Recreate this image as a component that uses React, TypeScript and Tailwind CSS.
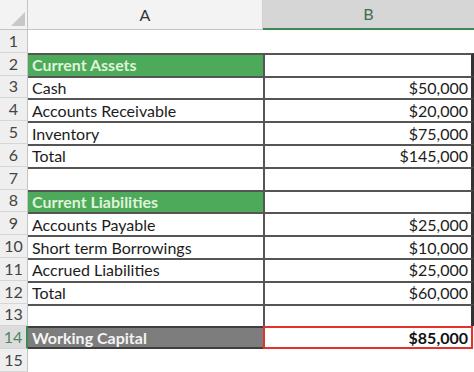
import React from "react"

type Row = {
  n: number
  a?: string
  b?: string
  kind?: "blank" | "head" | "item" | "result"
}

const rows: Row[] = [
  { n: 1, kind: "blank" },
  { n: 2, a: "Current Assets", kind: "head" },
  { n: 3, a: "Cash", b: "$50,000" },
  { n: 4, a: "Accounts Receivable", b: "$20,000" },
  { n: 5, a: "Inventory", b: "$75,000" },
  { n: 6, a: "Total", b: "$145,000" },
  { n: 7 },
  { n: 8, a: "Current Liabilities", kind: "head" },
  { n: 9, a: "Accounts Payable", b: "$25,000" },
  { n: 10, a: "Short term Borrowings", b: "$10,000" },
  { n: 11, a: "Accrued Liabilities", b: "$25,000" },
  { n: 12, a: "Total", b: "$60,000" },
  { n: 13 },
  { n: 14, a: "Working Capital", b: "$85,000", kind: "result" },
  { n: 15, kind: "blank" },
]

function RowNumber({ n, active }: { n: number; active?: boolean }) {
  return (
    <div
      className={
        "w-[28px] shrink-0 flex items-center justify-center border-b border-[#d6d6d6] text-[16px] " +
        (active
          ? "bg-[#dcdcdc] text-[#4d8560] border-r-2 border-r-[#3c8a52]"
          : "bg-[#efefef] text-[#444] border-r border-r-[#c4c4c4]")
      }
    >
      {n}
    </div>
  )
}

function SheetRow({ row }: { row: Row }) {
  const kind = row.kind ?? "item"

  if (kind === "blank") {
    return (
      <div className="flex h-[22.8px]">
        <RowNumber n={row.n} />
        <div className="flex-1 bg-white" />
      </div>
    )
  }

  if (kind === "result") {
    return (
      <div className="flex h-[22.8px]">
        <RowNumber n={row.n} active />
        <div className="w-[235px] shrink-0 flex items-center pl-1 bg-[#7d7d7d] border-y-2 border-[#3e3e3e] font-bold text-[#f4f4f4]">
          {row.a}
        </div>
        <div className="flex-1 flex items-center justify-end pr-[3px] bg-white border-2 border-[#e3312b] font-bold text-[#111] mr-[1px]">
          {row.b}
        </div>
      </div>
    )
  }

  return (
    <div className="flex h-[22.8px]">
      <RowNumber n={row.n} />
      <div
        className={
          "w-[235px] shrink-0 flex items-center pl-1 border-t-2 border-[#555] " +
          (kind === "head" ? "bg-[#4caa5a] font-bold text-[#dff3d8]" : "bg-white text-[#1c1c1c]")
        }
      >
        {row.a}
      </div>
      <div className="flex-1 flex items-center justify-end pr-[3px] bg-white border-t-2 border-l-2 border-r-[3px] border-[#555] border-r-[#333] text-[#1c1c1c]">
        {row.b}
      </div>
    </div>
  )
}

export default function App() {
  return (
    <div
      className="w-[474px] h-[372px] overflow-hidden bg-white text-[16px] leading-none"
      style={{ fontFamily: "Lato, 'Open Sans', sans-serif" }}
    >
      {/* column headers */}
      <div className="flex h-[30px] bg-[#f3f3f3]">
        <div className="w-[28px] shrink-0 relative border-r border-[#c4c4c4] border-b border-b-[#c4c4c4]">
          <svg className="absolute right-[2px] bottom-[3px]" width="14" height="14" viewBox="0 0 14 14">
            <polygon points="14,0 14,14 0,14" fill="#c8c8c8" />
          </svg>
        </div>
        <div className="w-[235px] shrink-0 flex items-center justify-center border-r border-[#d0d0d0] border-b border-b-[#c4c4c4] text-[#333]">
          A
        </div>
        <div className="flex-1 flex items-center justify-center bg-[#d6d6d6] border-b-2 border-[#3c8a52] text-[#3e6e4c]">
          B
        </div>
      </div>
      {rows.map((r) => (
        <SheetRow key={r.n} row={r} />
      ))}
    </div>
  )
}
